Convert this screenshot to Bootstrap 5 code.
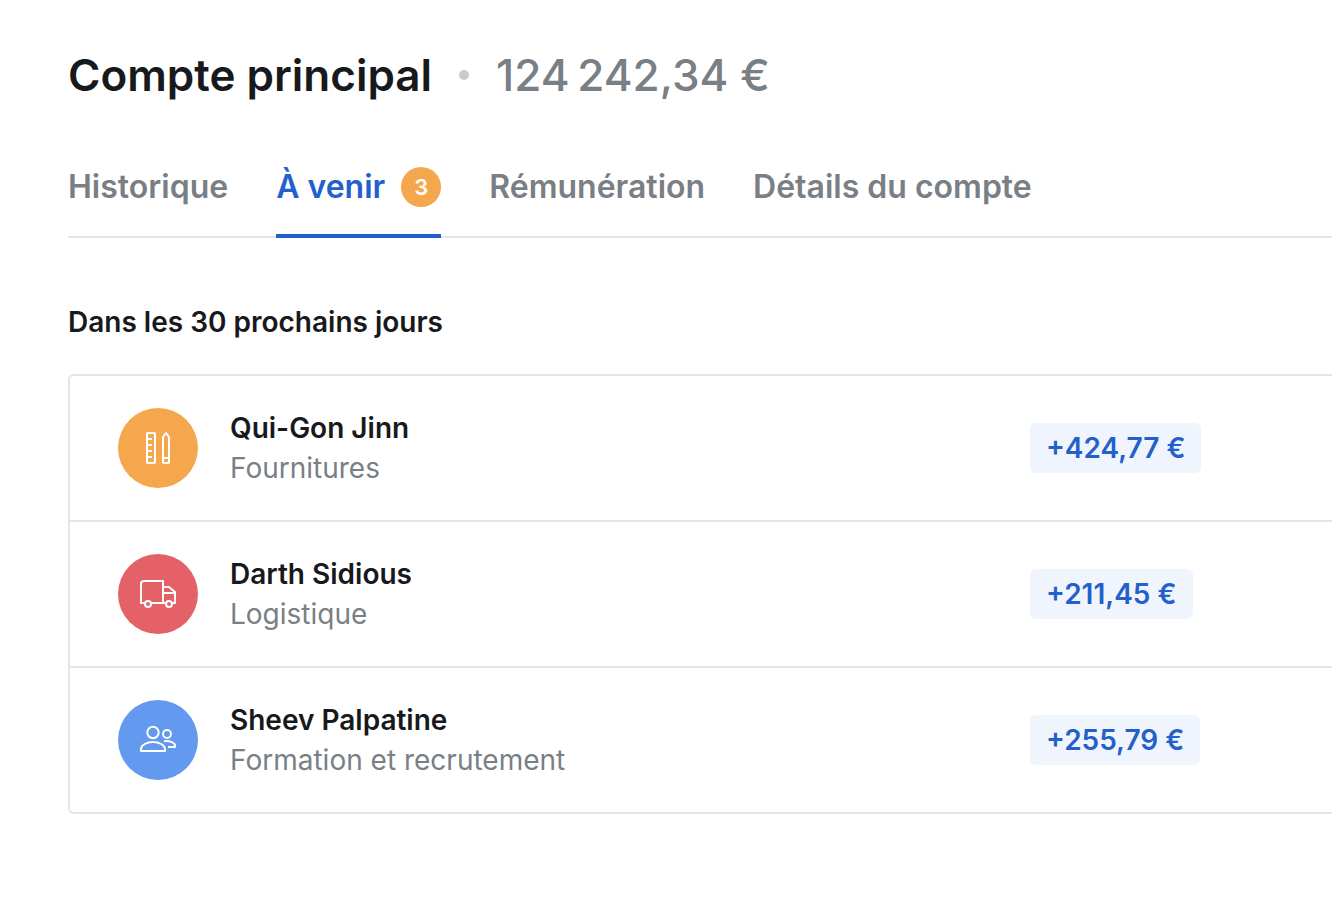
<!DOCTYPE html>
<html lang="fr">
<head>
<meta charset="utf-8">
<meta name="viewport" content="width=device-width, initial-scale=1">
<title>Compte principal</title>
<link rel="stylesheet" href="https://cdn.jsdelivr.net/npm/bootstrap@5.3.0/dist/css/bootstrap.min.css">
<style>
:root{--ink:#18191c;--muted-ink:#797f85;--line:#e4e5e6;--blue:#2360cb}
body{font-family:Inter,sans-serif;color:var(--ink);background:#fff}
.account{padding:47px 0 88px 68px}
.account-head{gap:27px}
.account-title,.account-balance{font-size:44px;line-height:56px}
.account-title{font-weight:600}
.account-balance{font-weight:500;color:var(--muted-ink)}
.dot{width:10px;height:10px;background:#c9cbcf}
.tabs{margin-top:53px;gap:48px;border-bottom:2px solid var(--line)}
.tabs .nav-link{padding:11px 0 27px;margin-bottom:-2px;border-bottom:4px solid transparent;font-size:32px;line-height:40px;font-weight:600;color:var(--muted-ink)}
.tabs .nav-link.active{color:var(--blue);border-color:var(--blue)}
.count{width:40px;height:40px;margin-left:16px;background:#f4a74d;color:#fff;font-size:22px;font-weight:600}
.section-title{margin:64px 0 32px;font-size:28px;line-height:40px;font-weight:600}
.entries{border:2px solid var(--line);border-right:0;border-radius:6px 0 0 6px}
.entry{padding:32px 0 32px 48px;border:0;gap:32px;color:inherit;background:none}
.entry+.entry{border-top:2px solid var(--line)}
.entry-icon{width:80px;height:80px;fill:none;stroke:#fff;stroke-width:2;stroke-linejoin:round}
.supplies{background:#f4a74d}
.logistics{background:#e46168}
.training{background:#6399ef}
.entry-name,.entry-kind{font-size:28px;line-height:40px}
.entry-name{font-weight:600}
.entry-kind{color:var(--muted-ink)}
.amount-cell{flex:0 0 302px}
.amount{background:#f0f5fd;color:var(--blue);font-size:28px;line-height:42px;font-weight:600;padding:4px 16px;border-radius:6px}
</style>
</head>
<body>
<main class="account">
  <header class="account-head d-flex align-items-center">
    <h1 class="account-title m-0">Compte principal</h1>
    <span class="dot rounded-circle"></span>
    <span class="account-balance">124&#8239;242,34&nbsp;€</span>
  </header>

  <nav class="tabs nav" aria-label="Compte">
    <a class="nav-link" href="#historique">Historique</a>
    <a class="nav-link active d-flex align-items-center" href="#a-venir" aria-current="page">À venir<span class="count rounded-circle d-flex align-items-center justify-content-center">3</span></a>
    <a class="nav-link" href="#remuneration">Rémunération</a>
    <a class="nav-link" href="#details">Détails du compte</a>
  </nav>

  <section id="a-venir">
    <h2 class="section-title">Dans les 30 prochains jours</h2>
    <ul class="entries list-group">
      <li class="entry list-group-item d-flex align-items-center">
        <svg class="entry-icon supplies rounded-circle flex-shrink-0" viewBox="0 0 80 80" aria-hidden="true">
          <rect x="29" y="25" width="8" height="30" rx="1"/>
          <path d="M29 31h5M29 37h5M29 43h5M29 49h5M45 29l3-4 3 4v25a1 1 0 0 1-1 1h-4a1 1 0 0 1-1-1zM45 50h6"/>
        </svg>
        <div class="flex-grow-1">
          <div class="entry-name">Qui-Gon Jinn</div>
          <div class="entry-kind">Fournitures</div>
        </div>
        <div class="amount-cell"><span class="amount d-inline-block">+424,77&nbsp;€</span></div>
      </li>
      <li class="entry list-group-item d-flex align-items-center">
        <svg class="entry-icon logistics rounded-circle flex-shrink-0" viewBox="0 0 80 80" aria-hidden="true">
          <path d="M27 49h-4V30a3 3 0 0 1 3-3h19v22H33M45 33h6l6 5v11h-3M45 39h12M45 49h3"/>
          <circle cx="30" cy="50" r="3"/><circle cx="51" cy="50" r="3"/>
        </svg>
        <div class="flex-grow-1">
          <div class="entry-name">Darth Sidious</div>
          <div class="entry-kind">Logistique</div>
        </div>
        <div class="amount-cell"><span class="amount d-inline-block">+211,45&nbsp;€</span></div>
      </li>
      <li class="entry list-group-item d-flex align-items-center">
        <svg class="entry-icon training rounded-circle flex-shrink-0" viewBox="0 0 80 80" aria-hidden="true">
          <circle cx="35" cy="32.5" r="5.7"/><circle cx="49" cy="34" r="4"/>
          <path d="M23 51v-2c0-4 6-7 12-7s12 3 12 7v2zM46 41.200c6-.7 11 1.800 11 4.300V47h-7"/>
        </svg>
        <div class="flex-grow-1">
          <div class="entry-name">Sheev Palpatine</div>
          <div class="entry-kind">Formation et recrutement</div>
        </div>
        <div class="amount-cell"><span class="amount d-inline-block">+255,79&nbsp;€</span></div>
      </li>
    </ul>
  </section>
</main>
<script src="https://cdn.jsdelivr.net/npm/bootstrap@5.3.0/dist/js/bootstrap.bundle.min.js"></script>
</body>
</html>
